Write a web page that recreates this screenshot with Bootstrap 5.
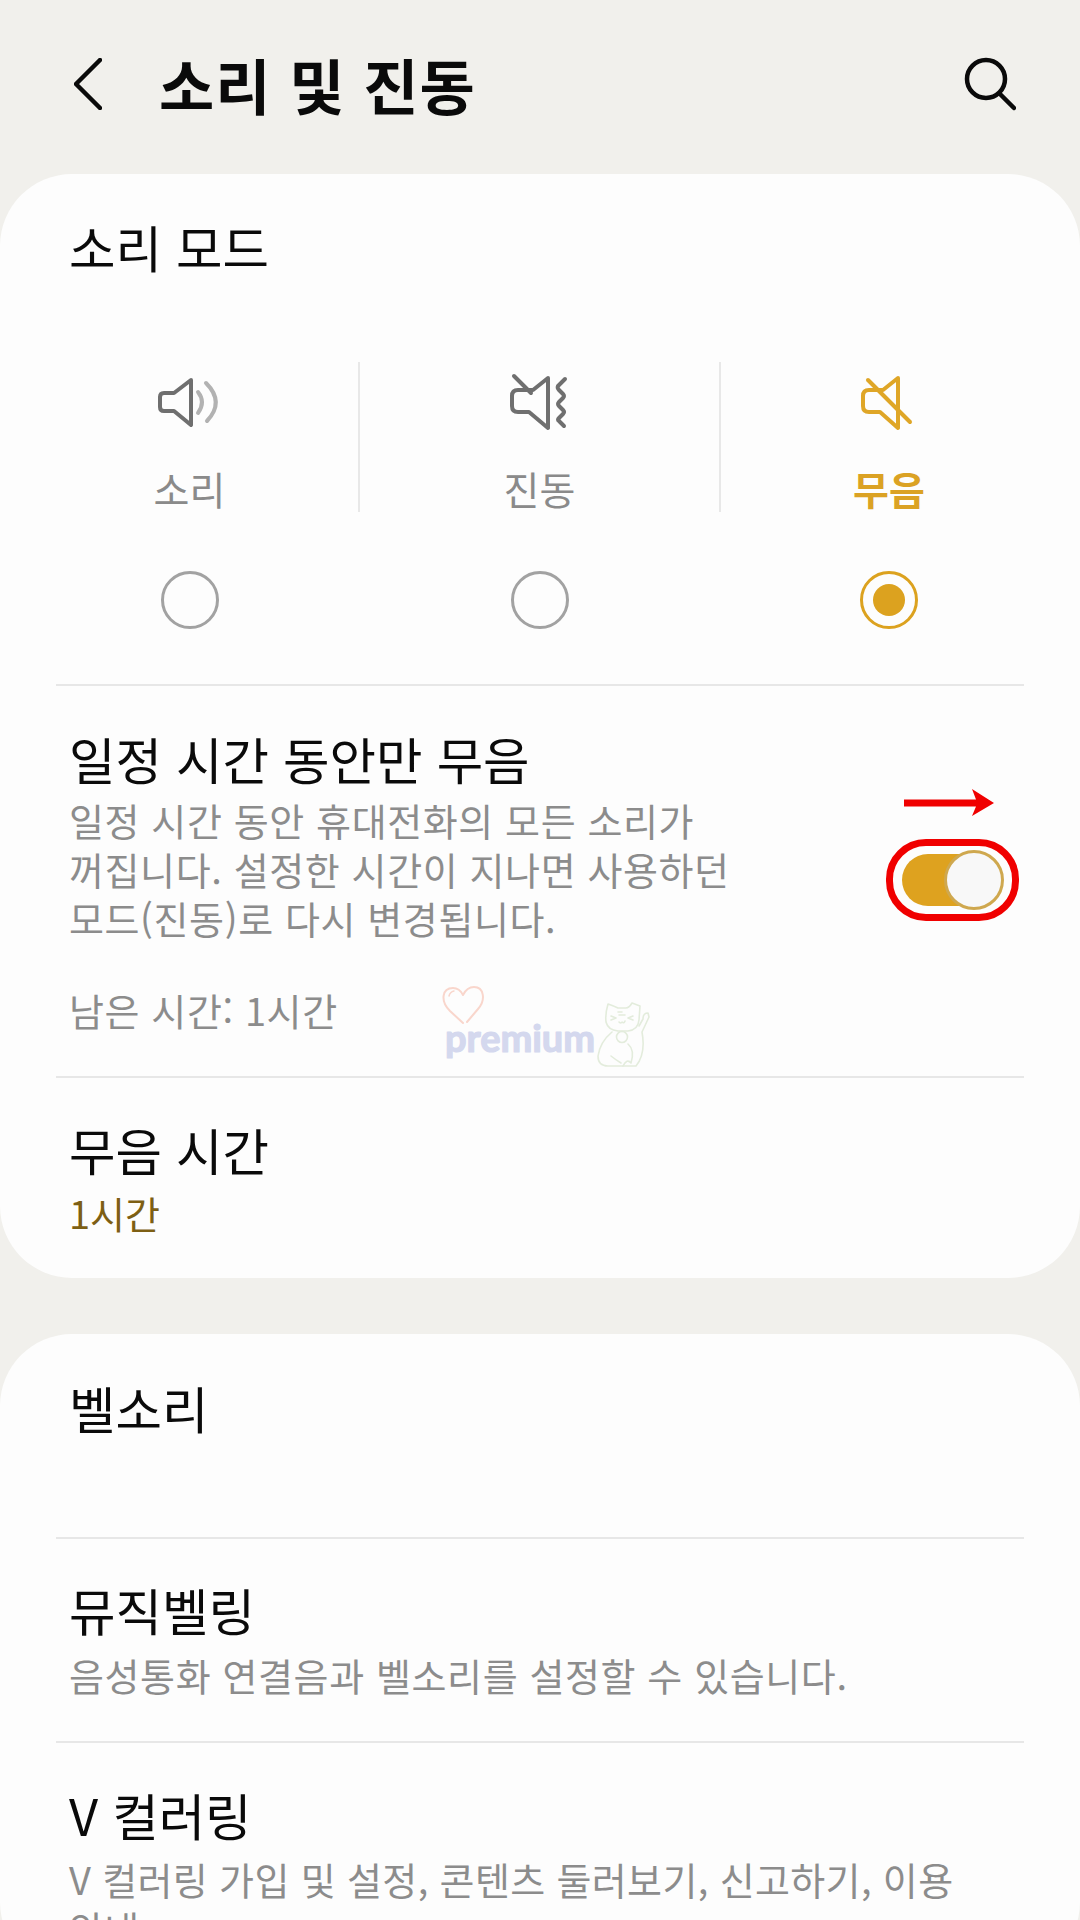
<!DOCTYPE html>
<html lang="ko">
<head>
  <meta charset="UTF-8">
  <title>소리 및 진동</title>
  <link href="https://cdn.jsdelivr.net/npm/bootstrap@5.3.2/dist/css/bootstrap.min.css" rel="stylesheet">
  <style>
    html, body { height: 1920px; overflow: hidden; }
    body { background: #f1f0ec; color: #0a0a0a; font-family: "Noto Sans CJK KR", "Noto Sans", sans-serif; }
    .top-bar { height: 174px; padding: 0 64px 6px 74px; }
    .top-title { font-size: 60px; font-weight: 700; line-height: 70px; margin: 0 0 0 57px; letter-spacing: 1px; }
    .sheet { background: #fdfdfd; border-radius: 72px; padding: 0 56px; }
    .sheet-one { height: 1104px; margin-bottom: 56px; }
    .sheet-two { height: 640px; }
    .row-title { font-size: 50.5px; line-height: 60px; padding: 0 13px; white-space: nowrap; }
    .row-sub { font-size: 38px; line-height: 49px; color: #8c8c8c; padding: 0 13px; white-space: nowrap; letter-spacing: .6px; }
    .row-sub.tight { letter-spacing: .35px; }
    .row-value { font-size: 38px; line-height: 49px; color: #7d5f14; padding: 0 13px; }
    .rule { height: 2px; background: #e7e7e7; }
    .modes { display: grid; grid-template-columns: 339px 361px 336px; margin: 86px -33px 0 -35px; }
    .mode-top { height: 150px; padding-top: 8px; border-right: 2px solid #e8e8e8; }
    .mode-top.last { border-right: 0; }
    .mode-label { font-size: 39px; line-height: 46px; margin-top: 25px; color: #8a8a8a; }
    .mode-label.on { color: #dba224; font-weight: 700; }
    .radio-dot { width: 58px; height: 58px; margin: 59px 2px 0 0; border: 3px solid #a2a2a2; }
    .radio-dot.on { border-color: #dca21f; margin-right: 0; }
    .radio-dot.on::after { content: ""; width: 32px; height: 32px; border-radius: 50%; background: #dca21f; }
    .toggle-track { width: 101px; height: 52px; background: #dea21f; border-radius: 26px; margin: 0 21px 3px 0; }
    .toggle-knob { width: 60px; height: 60px; margin: -4px -1px -4px 0; background: #f8f8f8; border: 3px solid #cfa84f; }
    .red-ring { inset: -15px -16px -15px; border: 7px solid #f00000; border-radius: 40px; }
    .red-arrow { left: 2px; top: -65px; }
    .watermark { left: 420px; top: 796px; }
  </style>
</head>
<body>
<div class="d-flex align-items-center justify-content-between top-bar">
  <div class="d-flex align-items-center">
    <svg width="28" height="52" viewBox="0 0 28 52" fill="none" stroke="#0a0a0a" stroke-width="4.5" stroke-linecap="round" stroke-linejoin="round"><path d="M26 2 L2 26 L26 50"/></svg>
    <h1 class="top-title">소리 및 진동</h1>
  </div>
  <svg width="52" height="54" viewBox="0 0 52 54" fill="none" stroke="#0a0a0a" stroke-width="4.5" stroke-linecap="round"><circle cx="22" cy="22" r="19"/><path d="M36 37 L50 51"/></svg>
</div>

<div class="sheet sheet-one position-relative">
  <div class="row-title" style="padding-top:42px">소리 모드</div>

  <div class="modes text-center">
    <div>
      <div class="mode-top">
        <svg width="120" height="70" viewBox="0 0 120 70" fill="none" stroke="#6f6f6f" stroke-width="4" stroke-linejoin="round" stroke-linecap="round">
          <path d="M61 10 L44 23 H34 Q30 23 30 27 V37 Q30 41 34 41 H44 L61 55 Z"/>
          <path d="M68 22 Q76 32 68 43" stroke="#b2b2b2"/><path d="M76 13 Q95 32 77 51" stroke="#b2b2b2"/>
        </svg>
        <div class="mode-label">소리</div>
      </div>
      <span class="radio-dot rounded-circle d-inline-flex align-items-center justify-content-center"></span>
    </div>
    <div>
      <div class="mode-top">
        <svg width="120" height="70" viewBox="-10 0 120 70" fill="none" stroke="#6f6f6f" stroke-width="4" stroke-linejoin="round" stroke-linecap="round">
          <path d="M58 8 L43 20 H28 Q22 20 22 26 V36 Q22 42 28 42 H39 L58 58 Z"/>
          <path d="M24 6 L41 23"/>
          <path d="M75 9 L68 16 Q67 18 69 20 L73 24 Q75 26 73 28 L69 32 Q67 34 69 36 L73 40 Q75 42 73 44 L69 48 Q67 50 69 51 L74 56"/>
        </svg>
        <div class="mode-label">진동</div>
      </div>
      <span class="radio-dot rounded-circle d-inline-flex align-items-center justify-content-center"></span>
    </div>
    <div>
      <div class="mode-top last">
        <svg width="120" height="70" viewBox="-11 0 120 70" fill="none" stroke="#dfa627" stroke-width="4" stroke-linejoin="round" stroke-linecap="round">
          <path d="M58 8 L43 20 H29 Q23 20 23 26 V36 Q23 42 29 42 H40 L58 58 Z"/>
          <path d="M28 10 L70 52"/>
        </svg>
        <div class="mode-label on">무음</div>
      </div>
      <span class="radio-dot on rounded-circle d-inline-flex align-items-center justify-content-center"></span>
    </div>
  </div>

  <div class="rule" style="margin-top:50px"></div>

  <div class="d-flex align-items-center justify-content-between" style="padding:42px 0">
    <div>
      <div class="row-title">일정 시간 동안만 무음</div>
      <div class="row-sub" style="margin-top:7px">일정 시간 동안 휴대전화의 모든 소리가<br>꺼집니다. 설정한 시간이 지나면 사용하던<br>모드(진동)로 다시 변경됩니다.</div>
      <div class="row-sub" style="margin-top:43px">남은 시간: 1시간</div>
    </div>
    <div class="toggle-track position-relative d-flex align-items-center justify-content-end">
      <span class="toggle-knob rounded-circle"></span>
      <span class="red-ring position-absolute"></span>
      <svg class="red-arrow position-absolute" width="90" height="28" viewBox="0 0 90 28" fill="#f00000"><path d="M0 10.5 H72 L68 0 L90 14 L68 27 L72 17.5 H0 Z"/></svg>
    </div>
  </div>

  <div class="rule"></div>

  <div class="row-title" style="padding-top:41px">무음 시간</div>
  <div class="row-value" style="margin-top:9px">1시간</div>

  <svg class="watermark position-absolute" width="240" height="110" viewBox="0 0 240 110" fill="none" stroke-linecap="round" stroke-linejoin="round">
    <path d="M43 53 L30 41 C20 31 22 18 33 18 C38 18 41 21 43 25 C45 21 49 17 54 17 C64 17 66 30 58 39 L47 52" stroke="#f9d6cc" stroke-width="2"/>
    <path d="M29 26 Q30 22 34 21" stroke="#f9d6cc" stroke-width="1.5"/>
    <text x="25" y="82" font-family="Lato, sans-serif" font-weight="700" font-size="38" fill="#d4d8ee" stroke="#d4d8ee" stroke-width="1.2" textLength="150">premium</text>
    <g stroke="#e3ecdc" stroke-width="1.6">
      <path d="M188 34 Q185 44 186 52 Q188 60 198 61 H208 Q218 60 219 50 L220 36 L212 33 Q209 38 206 38 H198 Q194 36 188 34 Z"/>
      <path d="M192 62 Q180 72 178 86 Q178 96 188 96 H216 Q226 84 222 62 L229 47 L228 43 Q223 43 223 49 L219 56"/>
      <circle cx="202" cy="67" r="5.5"/>
      <path d="M191 50 L196 48 M191 46 L196 48 M213 50 L208 48 M213 46 L208 48 M199 52 Q201 54 202 52 Q204 54 205 51 M198 42 H202 M199 45 H205"/>
      <path d="M191 86 Q196 90 201 93 M208 74 Q215 80 211 93 M203 96 Q207 88 211 93"/>
    </g>
  </svg>
</div>

<div class="sheet sheet-two">
  <div class="row-title" style="padding:43px 13px 100px">벨소리</div>
  <div class="rule"></div>
  <div class="row-title" style="padding-top:40px">뮤직벨링</div>
  <div class="row-sub" style="margin:11px 0 42px">음성통화 연결음과 벨소리를 설정할 수 있습니다.</div>
  <div class="rule"></div>
  <div class="row-title" style="padding-top:41px">V 컬러링</div>
  <div class="row-sub tight" style="margin-top:10px">V 컬러링 가입 및 설정, 콘텐츠 둘러보기, 신고하기, 이용<br>안내</div>
</div>

<script src="https://cdn.jsdelivr.net/npm/bootstrap@5.3.2/dist/js/bootstrap.bundle.min.js"></script>
</body>
</html>
